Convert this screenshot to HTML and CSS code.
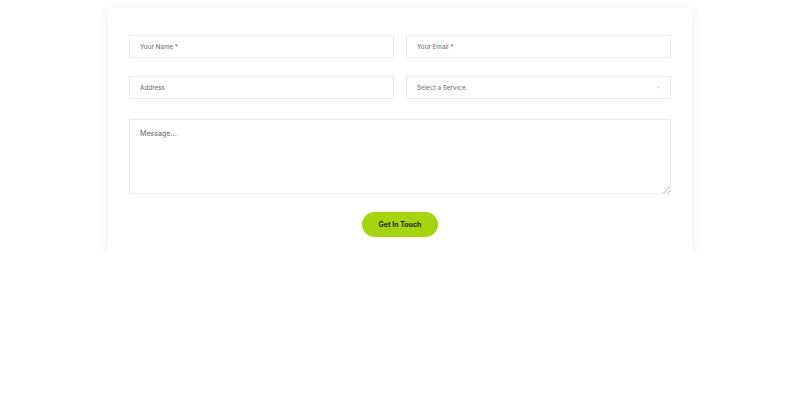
FILE: index.html
```html
<!DOCTYPE html>
<html lang="en">
<head>
  <meta charset="UTF-8" />
  <meta name="viewport" content="width=device-width, initial-scale=1.0" />
  <title>Contact</title>
  <link rel="stylesheet" href="styles.css">
</head>
<body>
  <main class="contact-card">
    <form class="contact-form">
      <input type="text" class="field" placeholder="Your Name *">
      <input type="email" class="field" placeholder="Your Email *">
      <input type="text" class="field" placeholder="Address">
      <div class="select-wrap">
        <select class="field">
          <option>Select a Service</option>
          <option>Consulting</option>
          <option>Design</option>
        </select>
      </div>
      <textarea class="field message" placeholder="Message..."></textarea>
      <div class="actions">
        <button type="submit">Get In Touch</button>
      </div>
    </form>
  </main>
</body>
</html>
```

FILE: styles.css
```css
body {
  font-family: Inter, "Noto Sans", sans-serif;
  background: #fff;
  margin: 0;
  padding: 8px 0 0;
}
.contact-card {
  width: 584px;
  margin: 0 auto;
  background: #fff;
  padding: 27px 21px 16px;
  box-sizing: border-box;
  box-shadow: 0 1px 10px rgba(0, 0, 0, 0.07);
}
.contact-form {
  display: grid;
  grid-template-columns: 1fr 1fr;
  column-gap: 12px;
  row-gap: 18px;
}
.field {
  display: block;
  width: 100%;
  height: 23px;
  box-sizing: border-box;
  border: 1px solid #ebebeb;
  background: #fff;
  padding: 0 10px;
  font-family: inherit;
  font-size: 6.3px;
  font-weight: 500;
  color: #7a7a7a;
  outline: none;
  border-radius: 0;
}
.field::placeholder {
  color: #7a7a7a;
}
.select-wrap {
  position: relative;
}
select.field {
  appearance: none;
  -webkit-appearance: none;
}
.select-wrap::after {
  content: "";
  position: absolute;
  right: 12px;
  top: 11px;
  border-left: 1.5px solid transparent;
  border-right: 1.5px solid transparent;
  border-top: 2px solid #c4c4c4;
}
.message {
  grid-column: 1 / -1;
  height: 75px;
  margin-top: 2px;
  padding: 9px 10px;
  font-size: 7px;
  resize: vertical;
}
.message::-webkit-resizer {
  background: linear-gradient(135deg, transparent 76%, #d4d4d4 76%, #d4d4d4 82%, transparent 82%, transparent 88%, #d4d4d4 88%, #d4d4d4 94%, transparent 94%);
}
.actions {
  grid-column: 1 / -1;
  display: flex;
  justify-content: center;
}
.actions button {
  width: 76px;
  height: 25px;
  border: none;
  border-radius: 13px;
  background: #a4d50e;
  color: #1e2a10;
  font-family: inherit;
  font-size: 7px;
  font-weight: 700;
  cursor: pointer;
}
```
